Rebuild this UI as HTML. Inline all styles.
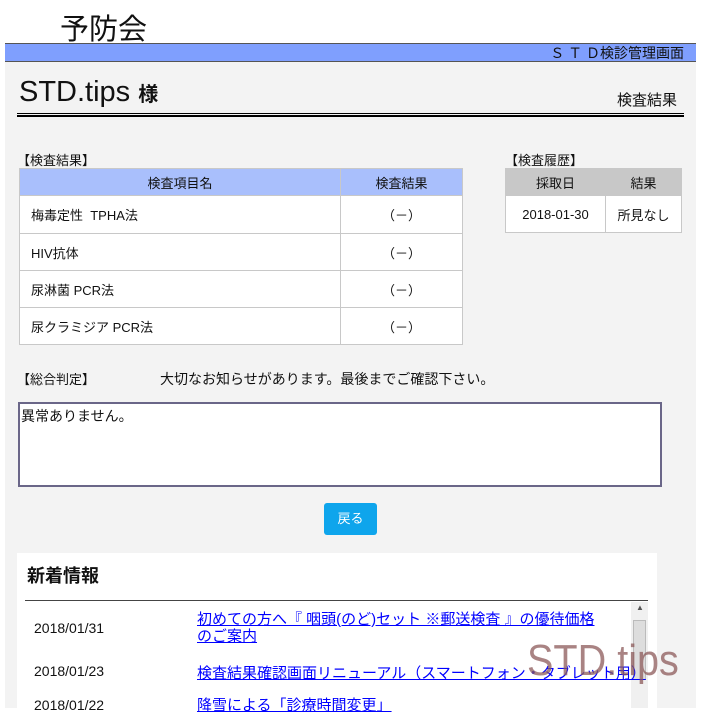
<!DOCTYPE html>
<html><head><meta charset="utf-8"><style>
*{margin:0;padding:0;box-sizing:border-box}
body{width:708px;height:708px;overflow:hidden;background:#fff;font-family:"Liberation Sans","Noto Sans CJK JP",sans-serif;color:#111;position:relative;font-size:13px}
.a{position:absolute;white-space:nowrap}
table{border-collapse:collapse;position:absolute;background:#fff}
td,th{border:1px solid #c8c8c8;font-weight:normal;font-size:13px}
a{color:#00f;text-decoration:underline}
</style></head><body>
<div class="a" style="left:60px;top:6px;font-size:29px">予防会</div>
<div class="a" style="left:5px;top:43px;width:691px;height:19px;background:#7f9ffe;border-top:1px solid #555;border-bottom:1px solid #555"></div>
<div class="a" style="right:24px;top:43px;font-size:14px">Ｓ Ｔ Ｄ検診管理画面</div>
<div class="a" style="left:5px;top:62px;width:691px;height:646px;background:#f3f3f3"></div>
<div class="a" style="left:19px;top:76px;font-size:29px">STD.tips <span style="font-size:20px;font-weight:bold">様</span></div>
<div class="a" style="left:617px;top:89px;font-size:15px">検査結果</div>
<div class="a" style="left:17px;top:113px;width:667px;height:1px;background:#000"></div>
<div class="a" style="left:17px;top:115px;width:667px;height:2px;background:#000"></div>
<div class="a" style="left:17px;top:150px">【検査結果】</div>
<table style="left:19px;top:168px;width:444px">
<tr style="height:27px;background:#a9bffc"><th style="width:321px">検査項目名</th><th>検査結果</th></tr>
<tr style="height:38px"><td style="padding-left:11px">梅毒定性&nbsp; TPHA法</td><td style="text-align:center">（－）</td></tr>
<tr style="height:37px"><td style="padding-left:11px">HIV抗体</td><td style="text-align:center">（－）</td></tr>
<tr style="height:37px"><td style="padding-left:11px">尿淋菌 PCR法</td><td style="text-align:center">（－）</td></tr>
<tr style="height:37px"><td style="padding-left:11px">尿クラミジア PCR法</td><td style="text-align:center">（－）</td></tr>
</table>
<div class="a" style="left:505px;top:150px">【検査履歴】</div>
<table style="left:505px;top:168px;width:177px">
<tr style="height:27px;background:#c8c8c8"><th style="width:100px">採取日</th><th>結果</th></tr>
<tr style="height:37px"><td style="text-align:center">2018-01-30</td><td style="text-align:center">所見なし</td></tr>
</table>
<div class="a" style="left:17px;top:369px">【総合判定】</div>
<div class="a" style="left:160px;top:369px;font-size:14px">大切なお知らせがあります。最後までご確認下さい。</div>
<div class="a" style="left:18px;top:402px;width:644px;height:85px;background:#fff;border:2px solid #6a6688;padding:2px 1px;font-size:14px">異常ありません。</div>
<div class="a" style="left:324px;top:503px;width:53px;height:32px;background:#0ea5ec;border-radius:3px;color:#fff;text-align:center;line-height:32px">戻る</div>
<div class="a" style="left:17px;top:553px;width:640px;height:155px;background:#fff"></div>
<div class="a" style="left:27px;top:562px;font-size:18px;font-weight:bold">新着情報</div>
<div class="a" style="left:25px;top:600px;width:623px;height:1px;background:#444"></div>
<div class="a" style="left:631px;top:602px;width:17px;height:106px;background:#f0f0f0"></div>
<div class="a" style="left:633px;top:620px;width:13px;height:60px;background:#ddd;border:1px solid #bbb"></div>
<div class="a" style="left:636px;top:603px;font-size:8px;color:#555">▲</div>
<div class="a" style="left:34px;top:620px;font-size:14px">2018/01/31</div>
<div class="a" style="left:197px;top:611px;font-size:15px;line-height:17px"><a>初めての方へ『 咽頭(のど)セット ※郵送検査 』の優待価格<br>のご案内</a></div>
<div class="a" style="left:34px;top:663px;font-size:14px">2018/01/23</div>
<div class="a" style="left:197px;top:662px;font-size:15px"><a>検査結果確認画面リニューアル（スマートフォン・タブレット用）</a></div>
<div class="a" style="left:34px;top:697px;font-size:14px">2018/01/22</div>
<div class="a" style="left:197px;top:694px;font-size:15px"><a>降雪による「診療時間変更」</a></div>
<div class="a" style="left:527px;top:636px;font-size:44px;color:rgba(140,90,90,.75);transform:scaleX(0.9);transform-origin:left top">STD.tips</div>
</body></html>
